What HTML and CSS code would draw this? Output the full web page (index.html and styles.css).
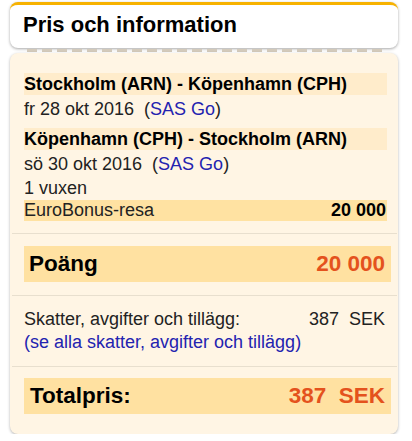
FILE: index.html
```html
<!DOCTYPE HTML>
<html>
<head>
<meta charset="UTF-8">
<title>Pris och information</title>
<link rel="stylesheet" href="styles.css">
</head>

<body>
<div id="panel">
	<div class="panel-head">
		<h2>Pris och information</h2>
	</div>
	<div class="tear"></div>
	<div class="panel-body">
		<div class="trip">
			<div class="route">Stockholm (ARN) - Köpenhamn (CPH)</div>
			<div class="line">fr 28 okt 2016&nbsp; (<a href="#">SAS Go</a>)</div>
			<div class="route second">Köpenhamn (CPH) - Stockholm (ARN)</div>
			<div class="line">sö 30 okt 2016&nbsp; (<a href="#">SAS Go</a>)</div>
			<div class="line">1 vuxen</div>
			<div class="bonus"><span>EuroBonus-resa</span><b>20 000</b></div>
		</div>
		<div class="section">
			<div class="sum"><span>Poäng</span><span class="amount">20 000</span></div>
		</div>
		<div class="section taxes">
			<div class="tax-row"><span>Skatter, avgifter och tillägg:</span><span>387&nbsp; SEK</span></div>
			<a href="#">(se alla skatter, avgifter och tillägg)</a>
		</div>
		<div class="section total">
			<div class="sum"><span>Totalpris:</span><span class="amount">387&nbsp; SEK</span></div>
		</div>
	</div>
</div>
</body>
</html>
```

FILE: styles.css
```css
body {margin:0; font-family:"Liberation Sans", Arial, sans-serif; color:#111; background:#fff;}
#panel {width:388px; margin:2px 0 0 10px;}
.panel-head {background:#fff; border-top:3px solid #f7b200; border-radius:8px; box-shadow:0 1px 3px rgba(0,0,0,.35); padding:7px 13px 10px 13px;}
.panel-head h2 {margin:0; font-size:22px; line-height:26px; font-weight:bold; color:#000;}
.tear {height:3px; margin:1px 14px 1px 17px; background:repeating-linear-gradient(to right, #d3cabb 0, #d3cabb 10px, transparent 10px, transparent 15px);}
.panel-body {background:#fff5e4; border-radius:8px; box-shadow:0 1px 3px rgba(0,0,0,.3); padding:0 1px 20px 2px;}
.trip {padding:20px 10px 12px 12px; font-size:18px;}
.route {background:#ffeccb; font-weight:bold; line-height:22px; color:#000;}
.route.second {margin-top:7px;}
.line {line-height:24px; color:#222;}
.trip .route + .line {margin-top:2px;}
a {color:#2323b0; text-decoration:none;}
.bonus {display:flex; justify-content:space-between; background:#ffe2a2; line-height:21px; padding-right:1px; color:#222;}
.bonus b {color:#000;}
.section {border-top:1px solid #e8dfce; padding:12px 6px 13px 12px;}
.sum {display:flex; justify-content:space-between; align-items:center; height:36px; background:#ffe1a1; padding:0 6px 0 5px; font-size:22.5px; font-weight:bold; color:#000;}
.sum .amount {color:#e4521d;}
.taxes {font-size:18px; line-height:23px; padding:12px 12px 12px 12px; color:#222;}
.tax-row {display:flex; justify-content:space-between;}
.total {padding:11px 6px 0 12px;}
.total .sum {padding-left:6px;}
```
